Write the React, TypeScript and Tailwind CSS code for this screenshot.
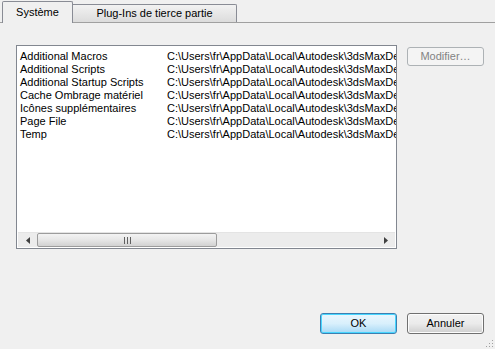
import React from "react";

const rows = [
  "Additional Macros",
  "Additional Scripts",
  "Additional Startup Scripts",
  "Cache Ombrage matériel",
  "Icônes supplémentaires",
  "Page File",
  "Temp",
];

export default function App() {
  return (
    <div
      className="relative w-[495px] h-[349px] bg-[#f0f0f0] text-[11px] text-black overflow-hidden flex flex-col"
      style={{ fontFamily: '"Liberation Sans", Arial, sans-serif' }}
    >
      {/* Tabs */}
      <div className="flex items-end h-[23px] pl-[2px] border-b border-[#a0a0a0] shrink-0">
        <div className="relative h-[22px] w-[71px] mb-[-1px] bg-[#f0f0f0] border border-b-0 border-[#898c95] rounded-t-[2px] flex items-center justify-center pb-[1px] z-10">
          Système
        </div>
        <div className="h-[18px] w-[164px] border border-l-0 border-b-0 border-[#898c95] rounded-tr-[2px] bg-gradient-to-b from-[#f2f2f2] to-[#dcdcdc] flex items-center justify-center">
          Plug-Ins de tierce partie
        </div>
      </div>

      {/* Content */}
      <div className="flex items-start pl-[16px] pt-[22px]">
        <div className="w-[381px] h-[204px] bg-white border border-[#828790] flex flex-col">
          <div className="flex-1 pt-[4px] pl-[3px] overflow-hidden">
            {rows.map((r) => (
              <div key={r} className="flex h-[13px] items-center leading-[13px] whitespace-nowrap">
                <div className="w-[147px] shrink-0">{r}</div>
                <div className="overflow-hidden w-[229px]">
                  C:\Users\fr\AppData\Local\Autodesk\3dsMaxDe
                </div>
              </div>
            ))}
          </div>
          {/* horizontal scrollbar */}
          <div className="h-[15px] mx-[1px] mb-[1px] flex items-stretch bg-[#ececec] border-t border-[#e4e4e4]">
            <div className="w-[19px] flex items-center justify-center">
              <svg width="4" height="7" viewBox="0 0 4 7">
                <path d="M4 0 L0 3.5 L4 7 Z" fill="#404040" />
              </svg>
            </div>
            <div className="w-[180px] rounded-[2px] border border-[#9c9c9c] bg-gradient-to-b from-[#f3f3f3] via-[#e6e6e6] to-[#d2d2d2] flex items-center justify-center">
              <svg width="7" height="7" viewBox="0 0 7 7">
                <rect x="0" y="0" width="1" height="7" fill="#606060" />
                <rect x="3" y="0" width="1" height="7" fill="#606060" />
                <rect x="6" y="0" width="1" height="7" fill="#606060" />
              </svg>
            </div>
            <div className="flex-1" />
            <div className="w-[19px] flex items-center justify-center">
              <svg width="4" height="7" viewBox="0 0 4 7">
                <path d="M0 0 L4 3.5 L0 7 Z" fill="#404040" />
              </svg>
            </div>
          </div>
        </div>
        <div className="ml-[10px] mt-[2px] w-[77px] h-[19px] rounded-[3px] border border-[#adb2b5] bg-[#f4f4f4] text-[#838383] flex items-center justify-center">
          Modifier…
        </div>
      </div>

      <div className="flex-1" />

      {/* Bottom buttons */}
      <div className="flex justify-end gap-[10px] pr-[11px] pb-[15px]">
        <div className="w-[77px] h-[21px] rounded-[3px] border border-[#3c7fb1] shadow-[inset_0_0_0_1px_#48d6ff] bg-gradient-to-b from-[#eaf6fd] via-[#d9f0fc] to-[#a7d9f5] flex items-center justify-center">
          OK
        </div>
        <div className="w-[77px] h-[21px] rounded-[3px] border border-[#707070] shadow-[inset_0_0_0_1px_#fcfcfc] bg-gradient-to-b from-[#f2f2f2] via-[#ebebeb] to-[#cfcfcf] flex items-center justify-center">
          Annuler
        </div>
      </div>

      {/* resize grip */}
      <svg className="absolute right-[1px] bottom-[1px]" width="10" height="10" viewBox="0 0 10 10">
        <rect x="8" y="2" width="1" height="1" fill="#a0a0a0" />
        <rect x="5" y="5" width="1" height="1" fill="#a0a0a0" />
        <rect x="8" y="5" width="1" height="1" fill="#a0a0a0" />
        <rect x="2" y="8" width="1" height="1" fill="#a0a0a0" />
        <rect x="5" y="8" width="1" height="1" fill="#a0a0a0" />
        <rect x="8" y="8" width="1" height="1" fill="#a0a0a0" />
      </svg>
    </div>
  );
}
